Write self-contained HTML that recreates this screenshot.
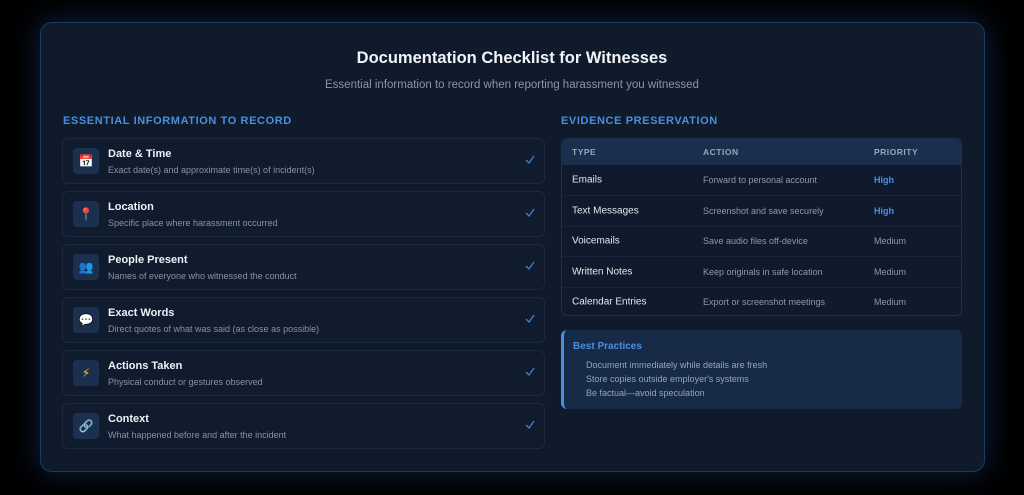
<!DOCTYPE html>
<html><head><meta charset="utf-8"><style>
*{box-sizing:border-box;margin:0;padding:0}
body{width:1024px;height:495px;background:#000;font-family:"Liberation Sans",sans-serif;position:relative;overflow:hidden}
.card{position:absolute;left:40px;top:22px;width:945px;height:450px;background:#0f1a2b;border:1px solid #1f3a60;border-radius:12px;box-shadow:0 0 30px rgba(40,90,170,.4)}
.t{position:absolute;left:0;width:1024px;text-align:center}
h1{top:49px;font-size:16.5px;color:#f1f4f8;font-weight:bold}
.sub{top:79px;font-size:11.5px;color:#8a96a8}
.h{position:absolute;top:115px;font-size:11px;font-weight:bold;color:#4a8fe0;letter-spacing:.6px}
.it{position:absolute;left:62px;width:483px;height:46px;background:#101b2e;border:1px solid #1a2a42;border-radius:6px}
.ic{position:absolute;left:10px;top:9px;width:26px;height:26px;background:#1b2f4e;border-radius:4px;font-size:12px;text-align:center;line-height:26px;font-family:"DejaVu Sans",sans-serif}
.it b{position:absolute;left:45px;top:9px;font-size:11px;color:#eef2f7}
.it span{position:absolute;left:45px;top:26px;font-size:9px;color:#8793a6}
.it svg{position:absolute;right:9px;top:16px}
.tb{position:absolute;left:561px;top:138px;width:401px;height:178px;border:1px solid #1c2f4c;border-radius:6px;overflow:hidden;background:#0f1a2c}
.th{height:26px;background:#1a2e4d;font-size:8.5px;color:#9aa7ba;font-weight:bold;letter-spacing:.5px;position:relative}
.r{height:30.4px;border-top:1px solid #17263d;position:relative}
.c1,.c2,.c3{position:absolute;top:50%;transform:translateY(-50%)}
.c1{left:10px}.c2{left:141px}.c3{left:312px}
.r .c1{font-size:10px;color:#e3e8ef}.r .c2{font-size:9px;color:#8e9aac}.r .c3{font-size:9px;color:#8e9aac}
.r .hi{color:#4a8fe0;font-weight:bold}
.bp{position:absolute;left:561px;top:330px;width:401px;height:79px;background:#172b48;border-left:3px solid #4a8fe0;border-radius:6px}
.bp b{position:absolute;left:9px;top:11px;font-size:10px;color:#4a8fe0}
.bp p{position:absolute;left:22px;font-size:9px;color:#97a3b5}
</style></head><body>
<div class="card"></div>
<h1 class="t">Documentation Checklist for Witnesses</h1>
<div class="t sub">Essential information to record when reporting harassment you witnessed</div>
<div class="h" style="left:63px">ESSENTIAL INFORMATION TO RECORD</div>
<div class="h" style="left:561px">EVIDENCE PRESERVATION</div>

<div class="it" style="top:138px"><div class="ic">📅</div><b>Date &amp; Time</b><span>Exact date(s) and approximate time(s) of incident(s)</span><svg width="10" height="9" viewBox="0 0 10 9"><path d="M1 5l3 3 5-7" fill="none" stroke="#3f7fd6" stroke-width="1.3"/></svg></div>
<div class="it" style="top:191px"><div class="ic">📍</div><b>Location</b><span>Specific place where harassment occurred</span><svg width="10" height="9" viewBox="0 0 10 9"><path d="M1 5l3 3 5-7" fill="none" stroke="#3f7fd6" stroke-width="1.3"/></svg></div>
<div class="it" style="top:244px"><div class="ic">👥</div><b>People Present</b><span>Names of everyone who witnessed the conduct</span><svg width="10" height="9" viewBox="0 0 10 9"><path d="M1 5l3 3 5-7" fill="none" stroke="#3f7fd6" stroke-width="1.3"/></svg></div>
<div class="it" style="top:297px"><div class="ic">💬</div><b>Exact Words</b><span>Direct quotes of what was said (as close as possible)</span><svg width="10" height="9" viewBox="0 0 10 9"><path d="M1 5l3 3 5-7" fill="none" stroke="#3f7fd6" stroke-width="1.3"/></svg></div>
<div class="it" style="top:350px"><div class="ic" style="color:#f5c542">⚡</div><b>Actions Taken</b><span>Physical conduct or gestures observed</span><svg width="10" height="9" viewBox="0 0 10 9"><path d="M1 5l3 3 5-7" fill="none" stroke="#3f7fd6" stroke-width="1.3"/></svg></div>
<div class="it" style="top:403px"><div class="ic" style="color:#b8c2d0">🔗</div><b>Context</b><span>What happened before and after the incident</span><svg width="10" height="9" viewBox="0 0 10 9"><path d="M1 5l3 3 5-7" fill="none" stroke="#3f7fd6" stroke-width="1.3"/></svg></div>

<div class="tb">
<div class="th"><span class="c1">TYPE</span><span class="c2">ACTION</span><span class="c3">PRIORITY</span></div>
<div class="r" style="border-top:0"><span class="c1">Emails</span><span class="c2">Forward to personal account</span><span class="c3 hi">High</span></div>
<div class="r"><span class="c1">Text Messages</span><span class="c2">Screenshot and save securely</span><span class="c3 hi">High</span></div>
<div class="r"><span class="c1">Voicemails</span><span class="c2">Save audio files off-device</span><span class="c3">Medium</span></div>
<div class="r"><span class="c1">Written Notes</span><span class="c2">Keep originals in safe location</span><span class="c3">Medium</span></div>
<div class="r"><span class="c1">Calendar Entries</span><span class="c2">Export or screenshot meetings</span><span class="c3">Medium</span></div>
</div>

<div class="bp"><b>Best Practices</b>
<p style="top:30px">Document immediately while details are fresh</p>
<p style="top:44px">Store copies outside employer's systems</p>
<p style="top:58px">Be factual—avoid speculation</p>
</div>
</body></html>
